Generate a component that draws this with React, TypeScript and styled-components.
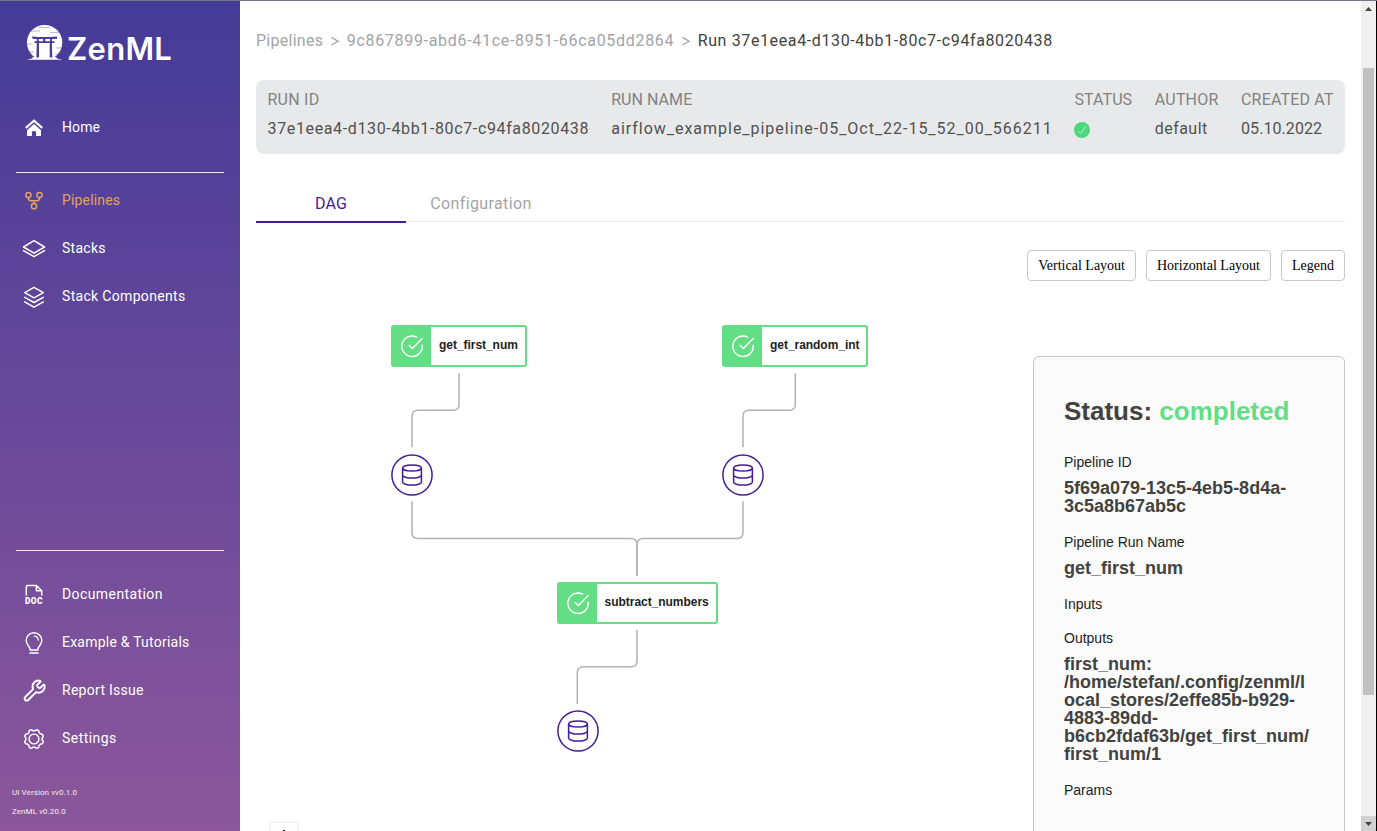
import React from 'react';
import styled, { createGlobalStyle } from 'styled-components';
import { Wrench } from 'lucide-react';

const GlobalStyle = createGlobalStyle`
  * { box-sizing: border-box; }
  html, body { margin: 0; padding: 0; background: #fff; overflow: hidden; }
`;

const Window = styled.div`
  display: flex;
  width: 1377px;
  height: 831px;
  overflow: hidden;
  border-top: 1px solid #6d7a86;
  font-family: Roboto, 'Liberation Sans', sans-serif;
`;

/* ---------- sidebar ---------- */

const Sidebar = styled.aside`
  display: flex;
  flex-direction: column;
  flex: none;
  width: 240px;
  height: 100%;
  color: #fff;
  background: linear-gradient(180deg, #443b98 0%, #8c579b 100%);
`;

const Brand = styled.div`
  display: flex;
  height: 102px;
  padding: 23px 0 0 26px;
`;

const Wordmark = styled.span`
  margin: 5px 0 0 4px;
  font: 600 31px/40px Inter, sans-serif;
  letter-spacing: 0.3px;
`;

const Nav = styled.nav<{ $grow?: boolean }>`
  display: flex;
  flex-direction: column;
  flex: ${(p) => (p.$grow ? '1' : 'none')};
`;

const NavItem = styled.a<{ $active?: boolean; $track: number }>`
  display: flex;
  align-items: center;
  gap: 14px;
  height: 48px;
  padding-left: 20px;
  color: ${(p) => (p.$active ? '#e0a266' : '#fff')};
  font-size: 14px;
  line-height: 20px;
  letter-spacing: ${(p) => p.$track}px;

  svg { position: relative; top: 1px; flex: none; }
`;

const Divider = styled.hr<{ $top: number; $bottom: number }>`
  width: 208px;
  height: 1px;
  margin: ${(p) => p.$top}px 16px ${(p) => p.$bottom}px;
  border: 0;
  background: #f0eef4;
`;

const Versions = styled.footer`
  display: flex;
  flex-direction: column;
  padding: 21px 12px 10px;
  font-size: 8px;
  line-height: 19px;
  letter-spacing: 0.08px;
  color: #f3edf6;
`;

/* ---------- main area ---------- */

const Main = styled.main`
  display: flex;
  flex-direction: column;
  flex: 1;
  min-width: 0;
  padding: 0 16px;
`;

const Breadcrumbs = styled.div`
  display: flex;
  height: 79px;
  padding-top: 29px;
  font-size: 16px;
  line-height: 22px;
  color: #a3a4a8;
`;

const Crumb = styled.span<{ $track: number; $current?: boolean }>`
  letter-spacing: ${(p) => p.$track}px;
  white-space: nowrap;
  color: ${(p) => (p.$current ? '#424240' : 'inherit')};
`;

const Chevron = styled.svg`
  flex: none;
  width: 23.5px;
  height: 22px;
`;

const RunHeader = styled.section`
  display: flex;
  justify-content: space-between;
  height: 74px;
  padding: 8px 11.5px 0 11.5px;
  border-radius: 8px;
  background: #e8e9ea;
  font-size: 16px;
`;

const Field = styled.div`
  display: flex;
  flex-direction: column;
  white-space: nowrap;
`;

const FieldLabel = styled.span<{ $track: number }>`
  line-height: 24px;
  letter-spacing: ${(p) => p.$track}px;
  margin-right: -${(p) => p.$track}px;
  color: #828282;
`;

const FieldValue = styled.span<{ $track: number }>`
  margin-top: 5px;
  margin-right: -${(p) => p.$track}px;
  line-height: 24px;
  letter-spacing: ${(p) => p.$track}px;
  color: #515150;
`;

const StatusDot = styled.svg`
  width: 16px;
  height: 16px;
  margin-top: 10px;
`;

const Tabs = styled.div`
  display: flex;
  height: 41px;
  margin-top: 28px;
  box-shadow: inset 0 -1px 0 #fff, inset 0 -2px 0 #e8e9ea;
`;

const Tab = styled.button<{ $active?: boolean; $track: number }>`
  width: 150px;
  height: 41px;
  padding: 5px 0 0;
  border: 0;
  border-bottom: 2px solid ${(p) => (p.$active ? '#431d93' : 'transparent')};
  background: none;
  font: 16px/24px Roboto, sans-serif;
  letter-spacing: ${(p) => p.$track}px;
  color: ${(p) => (p.$active ? '#431d93' : '#a3a4a8')};
`;

const Toolbar = styled.div`
  display: flex;
  justify-content: flex-end;
  gap: 10px;
  height: 58px;
  padding-top: 27px;
`;

const ToolButton = styled.button`
  height: 31px;
  padding: 0 10px;
  border: 1px solid #c8c8cc;
  border-radius: 4px;
  background: #fff;
  color: #000;
  font: 14px/18px 'Liberation Serif', serif;
`;

const Workspace = styled.div`
  display: flex;
  flex: 1;
  min-height: 0;
`;

const Canvas = styled.div`
  position: relative;
  flex: 1;
`;

const Edges = styled.svg`
  position: absolute;
  left: 0;
  top: 0;
  width: 777px;
  height: 550px;
`;

const StepNode = styled.div<{ $x: number; $y: number; $w: number }>`
  position: absolute;
  left: ${(p) => p.$x}px;
  top: ${(p) => p.$y}px;
  display: flex;
  width: ${(p) => p.$w}px;
  height: 42px;
  border: 2px solid #64de84;
  border-radius: 3px;
  background: #fff;
`;

const StepIcon = styled.div`
  display: flex;
  align-items: center;
  justify-content: center;
  width: 38px;
  height: 38px;
  flex: none;
  background: #64de84;
`;

const StepName = styled.span`
  padding-left: 8px;
  font: bold 12px/36px 'Liberation Sans', sans-serif;
  letter-spacing: -0.04px;
  color: #222;
`;

const DataNode = styled.div<{ $x: number; $y: number }>`
  position: absolute;
  left: ${(p) => p.$x}px;
  top: ${(p) => p.$y}px;
  width: 42px;
  height: 42px;
  svg { display: block; }
`;

const ZoomControl = styled.button`
  position: absolute;
  left: 15px;
  top: 542px;
  width: 26px;
  height: 27px;
  padding: 5px 0 0;
  border: 0;
  background: #fefefe;
  box-shadow: 0 0 2px 1px rgba(0, 0, 0, 0.08);
  display: flex;
  justify-content: center;
  align-items: flex-start;
`;

const Details = styled.aside`
  flex: none;
  width: 312px;
  height: 520px;
  margin-top: 75px;
  padding: 38px 30px 0;
  border: 1px solid #c5c5ca;
  border-radius: 6px;
  background: #fbfbfb;
  font-family: 'Liberation Sans', sans-serif;
`;

const StatusTitle = styled.h2`
  margin: 0 0 27px;
  font-size: 26px;
  line-height: 32px;
  color: #424240;
  white-space: nowrap;
  em { font-style: normal; color: #64de84; }
`;

const DetailLabel = styled.div`
  font-size: 14px;
  line-height: 16px;
  color: #222;
`;

const DetailValue = styled.div`
  margin: 9px 0 19px;
  font-size: 18px;
  font-weight: bold;
  line-height: 18px;
  color: #424240;
  overflow-wrap: anywhere;
  &:empty { margin: 0 0 18px; }
`;

/* ---------- scrollbar ---------- */

const Scrollbar = styled.div`
  display: flex;
  flex-direction: column;
  align-items: center;
  justify-content: space-between;
  flex: none;
  width: 16px;
  height: 100%;
  border-right: 1px solid #000;
  background: #f0f0f0;
`;

const ScrollArrow = styled.div<{ $down?: boolean }>`
  display: flex;
  align-items: center;
  justify-content: center;
  width: 15px;
  height: 15px;
  background: ${(p) => (p.$down ? '#d1d1d1' : 'transparent')};
  svg { transform: ${(p) => (p.$down ? 'rotate(180deg)' : 'none')}; }
`;

const ScrollThumb = styled.div`
  width: 11px;
  height: 627px;
  margin-bottom: 69px;
  background: #c1c1c1;
`;

/* ---------- drawings ---------- */

const LogoMark = () => (
  <svg width="37" height="38" viewBox="26 24 37 38" fill="#fff">
    <circle cx="44.6" cy="42.6" r="17.7" />
    <path d="M26.5 57.5h36v4.5h-36z" fill="#483e98" />
    <path d="M32.5 57h24v2h-24z" />
    <path d="M26.6 59.8q6-1.8 10-1.9h16q4 .1 10 1.9z" />
    <g fill="#483e98">
      <path d="M32 36.4q12.5 1.4 25 0v2.7H32.8z" />
      <path d="M34.5 41.3h20v1.8h-20zM43.1 39h2.2v3h-2.2zM36.8 39h2v3h-2zM50 39h2v3h-2z" />
      <path d="M36.8 43h2.2v14.5h-2.6zM49.7 43h2.2l.4 14.5h-2.6z" />
    </g>
    <path d="M38 27.6h12M31 31h9M50 32.6h9M27 44h5M27 52h7M56 48h6M55 54h5" stroke="#483e98" strokeWidth=".6" opacity=".65" />
  </svg>
);

const Icon = ({ children }: { children: React.ReactNode }) => (
  <svg width="28" height="28" viewBox="0 0 28 28" fill="none" stroke="currentColor" strokeWidth="1.5" strokeLinecap="round" strokeLinejoin="round">
    {children}
  </svg>
);

const HomeIcon = () => (
  <Icon>
    <path d="M5.8 13.8 14 6.6l8.2 7.2" strokeWidth="2.2" strokeLinejoin="miter" strokeLinecap="butt" />
    <path d="M14 10.1 7 16.2V22h4.900v-4.700h4.200V22H21v-5.800z" fill="currentColor" stroke="none" />
  </Icon>
);

const PipelineIcon = () => (
  <Icon>
    <circle cx="8.4" cy="8" r="2.6" />
    <circle cx="19.5" cy="8" r="2.6" />
    <circle cx="14" cy="19.2" r="2.6" />
    <path d="M8.4 10.7v.6a2.4 2.4 0 0 0 2.4 2.4h6.3a2.4 2.4 0 0 0 2.4-2.4v-.6M14 13.7V16.6" />
  </Icon>
);

const StackIcon = () => (
  <Icon>
    <path d="M14 5.6 24.5 12 14 18.2 3.5 12z" />
    <path d="M3.5 15.6 14 21.6l10.5-6" />
  </Icon>
);

const ComponentsIcon = () => (
  <Icon>
    <path d="M14 4.3 23.3 9.6 14 14.8 4.7 9.6z" />
    <path d="M4.7 14.3 14 19.5l9.3-5.2M4.7 18.9l9.3 5.2 9.3-5.2" />
  </Icon>
);

const DocIcon = () => (
  <Icon>
    <path d="M6.3 14V6a1.4 1.4 0 0 1 1.4-1.4h8.8l5.2 5.2V14M16.4 4.8v5h5" />
    <text x="4.9" y="23.1" textLength="18" lengthAdjust="spacingAndGlyphs" fontSize="8.2" fontWeight="900" fontFamily="Roboto, sans-serif" fill="currentColor" stroke="none">DOC</text>
  </Icon>
);

const BulbIcon = () => (
  <Icon>
    <path d="M10.1 21v-1c0-2-3.9-4.2-3.9-8.4a7.8 7.8 0 0 1 15.6 0c0 4.2-3.9 6.4-3.9 8.4v1z" />
    <path d="M14.3 7.2a4.4 4.4 0 0 1 4 4" strokeWidth="1.2" />
    <path d="M10 24.1h8" />
  </Icon>
);

const gearPath = (() => {
  const points: string[] = [];
  for (let i = 0; i < 160; i++) {
    const a = (i / 160) * Math.PI * 2;
    const r = 8.9 + 0.75 * Math.tanh(2 * Math.cos(8 * a + Math.PI));
    points.push(`${(14 + r * Math.cos(a)).toFixed(2)} ${(14 + r * Math.sin(a)).toFixed(2)}`);
  }
  return `M${points.join('L')}z`;
})();

const GearIcon = () => (
  <Icon>
    <path d={gearPath} />
    <circle cx="14" cy="14" r="4.9" strokeWidth="1.4" />
  </Icon>
);

const WrenchIcon = () => (
  <Icon>
    <Wrench x={2.6} y={1.6} width={24} height={24} strokeWidth={1.9} />
  </Icon>
);

const StepCheck = () => (
  <svg width="24" height="24" viewBox="0 0 24 24" fill="none" stroke="#fff" strokeWidth="1.4" strokeLinecap="round" strokeLinejoin="round">
    <path d="M16.6 3.1A10.2 10.2 0 1 0 22.2 11.2" />
    <path d="M9.2 11.4 12.4 14.6 22.2 4.4" />
  </svg>
);

const DataIcon = () => (
  <svg width="42" height="42" viewBox="0 0 42 42" fill="none" stroke="#431d93" strokeWidth="1.5">
    <circle cx="21" cy="21" r="20.1" fill="#fff" />
    <ellipse cx="21" cy="14" rx="9.4" ry="3.1" />
    <path d="M11.6 14v14c0 1.7 4.2 3.1 9.4 3.1s9.4-1.4 9.4-3.1V14M11.6 21c0 1.7 4.2 3.1 9.4 3.1s9.4-1.4 9.4-3.1" />
  </svg>
);

const Separator = () => (
  <Chevron viewBox="0 0 24 22" fill="none" stroke="#a3a4a8" strokeWidth="1.3">
    <path d="M8.6 7.3 15.4 11.2l-6.8 3.9" />
  </Chevron>
);

const ArrowGlyph = () => (
  <svg width="7" height="4" viewBox="0 0 7 4"><path d="M0 4 3.5 0 7 4z" fill="#444" /></svg>
);

/* ---------- data ---------- */

const primaryNav = [
  { label: 'Pipelines', icon: <PipelineIcon />, track: 0.16, active: true },
  { label: 'Stacks', icon: <StackIcon />, track: 0.27 },
  { label: 'Stack Components', icon: <ComponentsIcon />, track: 0.32 },
];

const secondaryNav = [
  { label: 'Documentation', icon: <DocIcon />, track: 0.41 },
  { label: 'Example & Tutorials', icon: <BulbIcon />, track: 0.23 },
  { label: 'Report Issue', icon: <WrenchIcon />, track: 0.28 },
  { label: 'Settings', icon: <GearIcon />, track: 0.45 },
];

const fields = [
  { label: 'RUN ID', lt: 0.25, value: '37e1eea4-d130-4bb1-80c7-c94fa8020438', vt: 0.637 },
  { label: 'RUN NAME', lt: 0.05, value: 'airflow_example_pipeline-05_Oct_22-15_52_00_566211', vt: 0.978 },
  { label: 'STATUS', lt: 0.08, value: '', vt: 0 },
  { label: 'AUTHOR', lt: 0.2, value: 'default', vt: 0.45 },
  { label: 'CREATED AT', lt: 0.17, value: '05.10.2022', vt: 0.07 },
];

const steps = [
  { name: 'get_first_num', x: 135, y: 44, w: 136 },
  { name: 'get_random_int', x: 466, y: 44, w: 146 },
  { name: 'subtract_numbers', x: 300.6, y: 300.7, w: 161 },
];

const artifacts = [
  { x: 134.8, y: 172.5 },
  { x: 465.8, y: 172.5 },
  { x: 300.5, y: 428.8 },
];

const edges = [
  'M203 92.2V123.2Q203 129.2 197 129.2H162Q156 129.2 156 135.2V166.3',
  'M539.3 92.2V123.2Q539.3 129.2 533.3 129.2H493Q487 129.2 487 135.2V166.3',
  'M156 220.3V251.5Q156 257.5 162 257.5H375Q381 257.5 381 263.5V294.7',
  'M487 220.3V251.5Q487 257.5 481 257.5H387Q381 257.5 381 263.5V294.7',
  'M381 348.7V379.8Q381 385.8 375 385.8H327.3Q321.3 385.8 321.3 391.8V423',
];

const details = [
  { label: 'Pipeline ID', value: '5f69a079-13c5-4eb5-8d4a-3c5a8b67ab5c' },
  { label: 'Pipeline Run Name', value: 'get_first_num' },
  { label: 'Inputs', value: '' },
  { label: 'Outputs', value: 'first_num: /home/stefan/.config/zenml/local_stores/2effe85b-b929-4883-89dd-b6cb2fdaf63b/get_first_num/first_num/1' },
  { label: 'Params', value: '' },
];

export default function App() {
  return (
    <Window>
      <GlobalStyle />
      <Sidebar>
        <Brand>
          <LogoMark />
          <Wordmark>ZenML</Wordmark>
        </Brand>
        <Nav>
          <NavItem $track={0.11}><HomeIcon />Home</NavItem>
        </Nav>
        <Divider $top={21} $bottom={3} />
        <Nav $grow>
          {primaryNav.map((n) => (
            <NavItem key={n.label} $active={n.active} $track={n.track}>{n.icon}{n.label}</NavItem>
          ))}
        </Nav>
        <Divider $top={0} $bottom={19} />
        <Nav>
          {secondaryNav.map((n) => (
            <NavItem key={n.label} $track={n.track}>{n.icon}{n.label}</NavItem>
          ))}
        </Nav>
        <Versions>
          <span>UI Version vv0.1.0</span>
          <span>ZenML v0.20.0</span>
        </Versions>
      </Sidebar>

      <Main>
        <Breadcrumbs>
          <Crumb $track={0.27}>Pipelines</Crumb>
          <Separator />
          <Crumb $track={0.69}>9c867899-abd6-41ce-8951-66ca05dd2864</Crumb>
          <Separator />
          <Crumb $track={0.624} $current>Run 37e1eea4-d130-4bb1-80c7-c94fa8020438</Crumb>
        </Breadcrumbs>

        <RunHeader>
          {fields.map((f) => (
            <Field key={f.label}>
              <FieldLabel $track={f.lt}>{f.label}</FieldLabel>
              {f.value ? (
                <FieldValue $track={f.vt}>{f.value}</FieldValue>
              ) : (
                <StatusDot viewBox="0 0 16 16">
                  <circle cx="8" cy="8" r="8" fill="#4cd97b" />
                  <path d="M4 9l2.4 2.7L12 4.3" fill="none" stroke="#b9f2cb" strokeWidth=".9" />
                </StatusDot>
              )}
            </Field>
          ))}
        </RunHeader>

        <Tabs>
          <Tab $active $track={0.2}>DAG</Tab>
          <Tab $track={0.38}>Configuration</Tab>
        </Tabs>

        <Toolbar>
          <ToolButton>Vertical Layout</ToolButton>
          <ToolButton>Horizontal Layout</ToolButton>
          <ToolButton>Legend</ToolButton>
        </Toolbar>

        <Workspace>
          <Canvas>
            <Edges fill="none" stroke="#b1b1b7" strokeWidth="1.5">
              {edges.map((d) => <path key={d} d={d} />)}
            </Edges>
            {steps.map((s) => (
              <StepNode key={s.name} $x={s.x} $y={s.y} $w={s.w}>
                <StepIcon><StepCheck /></StepIcon>
                <StepName>{s.name}</StepName>
              </StepNode>
            ))}
            {artifacts.map((a) => (
              <DataNode key={a.x} $x={a.x} $y={a.y}><DataIcon /></DataNode>
            ))}
            <ZoomControl>
              <svg width="12" height="12" viewBox="0 0 12 12"><path d="M5 2h2v3h3v2H7v3H5V7H2V5h3z" fill="#222" /></svg>
            </ZoomControl>
          </Canvas>
          <Details>
            <StatusTitle>Status: <em>completed</em></StatusTitle>
            {details.map((d) => (
              <React.Fragment key={d.label}>
                <DetailLabel>{d.label}</DetailLabel>
                <DetailValue>{d.value}</DetailValue>
              </React.Fragment>
            ))}
          </Details>
        </Workspace>
      </Main>

      <Scrollbar>
        <ScrollArrow><ArrowGlyph /></ScrollArrow>
        <ScrollThumb />
        <ScrollArrow $down><ArrowGlyph /></ScrollArrow>
      </Scrollbar>
    </Window>
  );
}
